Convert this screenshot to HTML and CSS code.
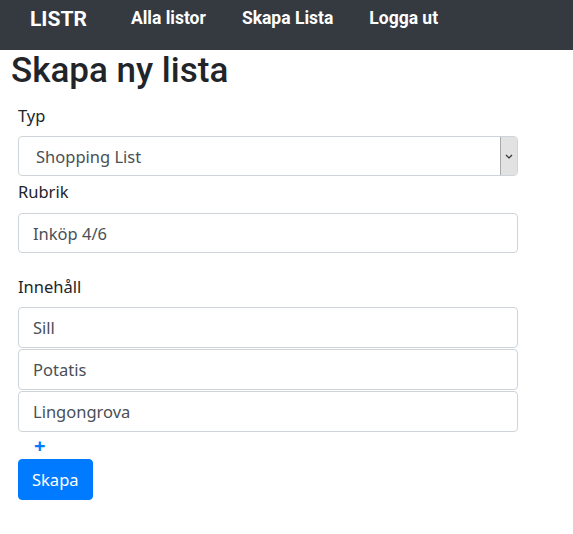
FILE: index.html
```html
<!DOCTYPE html>
<html lang="sv">
<head>
<meta charset="utf-8">
<title>LISTR</title>
<link rel="stylesheet" href="styles.css">
</head>
<body>
<nav class="navbar">
  <a class="brand" href="#">LISTR</a>
  <a class="nav-link" href="#">Alla listor</a>
  <a class="nav-link" href="#">Skapa Lista</a>
  <a class="nav-link" href="#">Logga ut</a>
</nav>
<main class="page">
  <h1 class="title">Skapa ny lista</h1>
  <form class="form">
    <label class="label label-first">Typ</label>
    <div class="select">
      <span class="select-text">Shopping List</span>
      <span class="select-btn">
        <svg width="8" height="5" viewBox="0 0 8 5"><path d="M1 1 L4 4 L7 1" fill="none" stroke="#333" stroke-width="1.2"/></svg>
      </span>
    </div>
    <label class="label label-rubrik">Rubrik</label>
    <div class="input">Inköp 4/6</div>
    <label class="label label-content">Innehåll</label>
    <div class="items">
      <div class="input">Sill</div>
      <div class="input">Potatis</div>
      <div class="input">Lingongrova</div>
    </div>
    <div class="add">+</div>
    <button class="btn" type="button">Skapa</button>
  </form>
</main>
</body>
</html>
```
FILE: styles.css
```css
* { box-sizing: border-box; }
body {
  margin: 0;
  background: #fff;
  font-family: "Noto Sans", "Open Sans", sans-serif;
  color: #212529;
}
.navbar {
  height: 50px;
  background: #343a40;
  display: flex;
  align-items: center;
  padding: 0 0 0 30px;
  font-family: Roboto, sans-serif;
  font-weight: 700;
}
.navbar a {
  color: #fff;
  text-decoration: none;
  line-height: 1;
  padding-bottom: 12px;
}
.brand {
  font-size: 21px;
  margin-right: 44px;
}
.nav-link {
  font-size: 17.5px;
  margin-right: 36px;
}
.title {
  margin: 0 0 0 11px;
  font-family: Roboto, sans-serif;
  font-weight: 500;
  font-size: 35px;
  line-height: 42px;
  color: #212529;
}
.form {
  padding-left: 18px;
  width: 518px;
  display: flex;
  flex-direction: column;
  align-items: flex-start;
}
.label {
  display: block;
  font-size: 16.5px;
  line-height: 24px;
  margin-bottom: 8px;
}
.label-first { margin-top: 12px; }
.label-rubrik { margin-top: 4px; margin-bottom: 9px; }
.label-content { margin-top: 22px; }
.select {
  width: 500px;
  height: 40px;
  border: 1px solid #ced4da;
  border-radius: 4px;
  display: flex;
  align-items: center;
  justify-content: space-between;
  padding: 0 0 0 17px;
  color: #495057;
  font-size: 16.5px;
}
.select-btn {
  width: 17px;
  height: 38px;
  background: #e2e2e2;
  border-left: 1px solid #a9a9a9;
  border-radius: 0 3px 3px 0;
  display: flex;
  align-items: center;
  justify-content: center;
}
.input {
  width: 500px;
  height: 40px;
  border: 1px solid #ced4da;
  border-radius: 4px;
  display: flex;
  align-items: center;
  padding: 0 14px;
  color: #495057;
  font-size: 16.5px;
}
.items {
  display: flex;
  flex-direction: column;
  gap: 1px;
}
.items .input { height: 41px; }
.add {
  color: #007bff;
  font-weight: 700;
  font-size: 20px;
  line-height: 26px;
  padding-left: 16px;
  margin-top: 1px;
}
.btn {
  height: 41px;
  padding: 0 13px;
  background: #007bff;
  color: #fff;
  border: 1px solid #007bff;
  border-radius: 4px;
  font-family: "Noto Sans", "Open Sans", sans-serif;
  font-size: 16.5px;
}
```
